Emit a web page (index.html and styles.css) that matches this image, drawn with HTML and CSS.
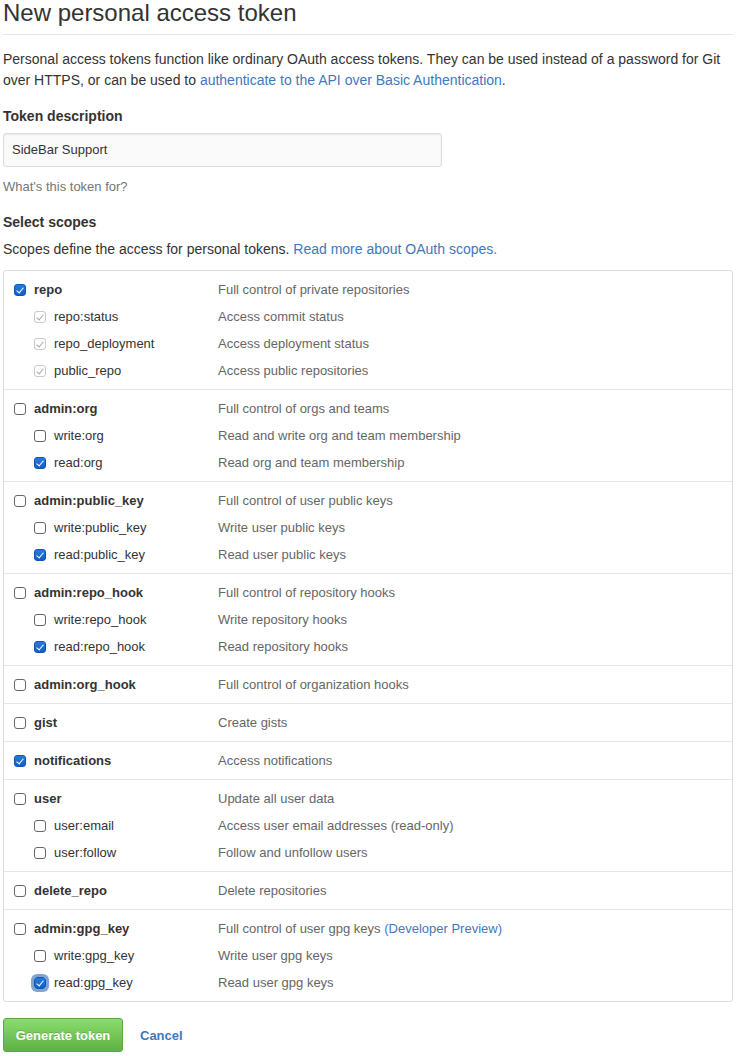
FILE: index.html
```html
<!DOCTYPE html>
<html>
<head>
<meta charset="utf-8">
<link rel="stylesheet" href="styles.css">
</head>
<body>
<div class="page">
  <h2 class="title">New personal access token</h2>
  <p class="intro">Personal access tokens function like ordinary OAuth access tokens. They can be used instead of a password for Git over HTTPS, or can be used to <a href="#">authenticate to the API over Basic Authentication</a>.</p>

  <div class="field">
    <label class="field-label">Token description</label>
    <div class="input">SideBar Support</div>
    <p class="note">What's this token for?</p>
  </div>

  <div class="field">
    <label class="field-label">Select scopes</label>
    <p class="scopes-intro">Scopes define the access for personal tokens. <a href="#">Read more about OAuth scopes.</a></p>
  </div>

  <div class="scopes">
    <div class="group">
      <div class="row top"><span class="cell"><span class="cb on"></span><b>repo</b></span><span class="desc">Full control of private repositories</span></div>
      <div class="row sub"><span class="cell"><span class="cb dis"></span>repo:status</span><span class="desc">Access commit status</span></div>
      <div class="row sub"><span class="cell"><span class="cb dis"></span>repo_deployment</span><span class="desc">Access deployment status</span></div>
      <div class="row sub"><span class="cell"><span class="cb dis"></span>public_repo</span><span class="desc">Access public repositories</span></div>
    </div>
    <div class="group">
      <div class="row top"><span class="cell"><span class="cb"></span><b>admin:org</b></span><span class="desc">Full control of orgs and teams</span></div>
      <div class="row sub"><span class="cell"><span class="cb"></span>write:org</span><span class="desc">Read and write org and team membership</span></div>
      <div class="row sub"><span class="cell"><span class="cb on"></span>read:org</span><span class="desc">Read org and team membership</span></div>
    </div>
    <div class="group">
      <div class="row top"><span class="cell"><span class="cb"></span><b>admin:public_key</b></span><span class="desc">Full control of user public keys</span></div>
      <div class="row sub"><span class="cell"><span class="cb"></span>write:public_key</span><span class="desc">Write user public keys</span></div>
      <div class="row sub"><span class="cell"><span class="cb on"></span>read:public_key</span><span class="desc">Read user public keys</span></div>
    </div>
    <div class="group">
      <div class="row top"><span class="cell"><span class="cb"></span><b>admin:repo_hook</b></span><span class="desc">Full control of repository hooks</span></div>
      <div class="row sub"><span class="cell"><span class="cb"></span>write:repo_hook</span><span class="desc">Write repository hooks</span></div>
      <div class="row sub"><span class="cell"><span class="cb on"></span>read:repo_hook</span><span class="desc">Read repository hooks</span></div>
    </div>
    <div class="group">
      <div class="row top"><span class="cell"><span class="cb"></span><b>admin:org_hook</b></span><span class="desc">Full control of organization hooks</span></div>
    </div>
    <div class="group">
      <div class="row top"><span class="cell"><span class="cb"></span><b>gist</b></span><span class="desc">Create gists</span></div>
    </div>
    <div class="group">
      <div class="row top"><span class="cell"><span class="cb on"></span><b>notifications</b></span><span class="desc">Access notifications</span></div>
    </div>
    <div class="group">
      <div class="row top"><span class="cell"><span class="cb"></span><b>user</b></span><span class="desc">Update all user data</span></div>
      <div class="row sub"><span class="cell"><span class="cb"></span>user:email</span><span class="desc">Access user email addresses (read-only)</span></div>
      <div class="row sub"><span class="cell"><span class="cb"></span>user:follow</span><span class="desc">Follow and unfollow users</span></div>
    </div>
    <div class="group">
      <div class="row top"><span class="cell"><span class="cb"></span><b>delete_repo</b></span><span class="desc">Delete repositories</span></div>
    </div>
    <div class="group">
      <div class="row top"><span class="cell"><span class="cb"></span><b>admin:gpg_key</b></span><span class="desc">Full control of user gpg keys <a href="#">(Developer Preview)</a></span></div>
      <div class="row sub"><span class="cell"><span class="cb"></span>write:gpg_key</span><span class="desc">Write user gpg keys</span></div>
      <div class="row sub"><span class="cell"><span class="cb on focus"></span>read:gpg_key</span><span class="desc">Read user gpg keys</span></div>
    </div>
  </div>

  <div class="actions">
    <button class="btn-primary" type="button">Generate token</button>
    <a class="cancel" href="#">Cancel</a>
  </div>
</div>
</body>
</html>
```

FILE: styles.css
```css
html, body {
  margin: 0;
  padding: 0;
  background: #fff;
}
body {
  font-family: "Liberation Sans", Arial, Helvetica, sans-serif;
  font-size: 14px;
  color: #333;
}
a {
  color: #4078c0;
  text-decoration: none;
}
.page {
  width: 730px;
  padding-left: 3px;
}
.title {
  margin: 0;
  font-size: 24px;
  font-weight: normal;
  line-height: 26px;
  padding-bottom: 8px;
  border-bottom: 1px solid #e5e5e5;
}
.intro {
  margin: 14px 0 0;
  line-height: 21px;
}
.field {
  margin-top: 15px;
}
.field-label {
  display: block;
  font-weight: bold;
  line-height: 21px;
}
.input {
  margin-top: 6px;
  width: 421px;
  height: 32px;
  line-height: 32px;
  padding: 0 8px;
  font-size: 13px;
  border: 1px solid #ddd;
  border-radius: 3px;
  background: #fafafa;
  box-shadow: inset 0 1px 2px rgba(0,0,0,0.075);
}
.note {
  margin: 10px 0 0;
  font-size: 13px;
  color: #767676;
  line-height: 20px;
}
.scopes-intro {
  margin: 6px 0 0;
  line-height: 21px;
}
.scopes {
  margin-top: 10px;
  border: 1px solid #ddd;
  border-radius: 3px;
  font-size: 13px;
}
.group {
  padding: 5px 0;
}
.group + .group {
  border-top: 1px solid #e5e5e5;
}
.row {
  display: flex;
  height: 27px;
  line-height: 28px;
}
.cell {
  display: flex;
  align-items: center;
  width: 214px;
  box-sizing: border-box;
}
.row.top .cell {
  padding-left: 10px;
}
.row.sub .cell {
  padding-left: 30px;
}
.desc {
  color: #666;
}
.cb {
  position: relative;
  flex: none;
  width: 12px;
  height: 12px;
  margin-right: 8px;
  margin-top: 0;
  box-sizing: border-box;
  border: 1px solid #666;
  border-radius: 3px;
  background: #fff;
}
.cb.on {
  border-color: #0f56b3;
  background: linear-gradient(#2a7ade, #115fc4);
}
.cb.on::after,
.cb.dis::after {
  content: "";
  position: absolute;
  left: 3px;
  top: 1px;
  width: 3px;
  height: 6px;
  border: solid #fff;
  border-width: 0 1.5px 1.5px 0;
  transform: rotate(40deg);
}
.cb.dis {
  border-color: #c9c9c9;
}
.cb.dis::after {
  border-color: #a9a9a9;
  border-width: 0 1px 1px 0;
}
.cb.focus {
  box-shadow: 0 0 0 3px #7fa4d2;
}
.actions {
  display: flex;
  align-items: center;
  margin-top: 16px;
}
.btn-primary {
  width: 120px;
  height: 34px;
  padding: 0;
  font-family: inherit;
  font-size: 13px;
  font-weight: bold;
  color: #fff;
  text-shadow: 0 -1px 0 rgba(0,0,0,0.15);
  background: linear-gradient(#8add6d, #60b044);
  border: 1px solid #5ca941;
  border-radius: 3px;
}
.cancel {
  margin-left: 17px;
  font-weight: bold;
  font-size: 13px;
}
```
